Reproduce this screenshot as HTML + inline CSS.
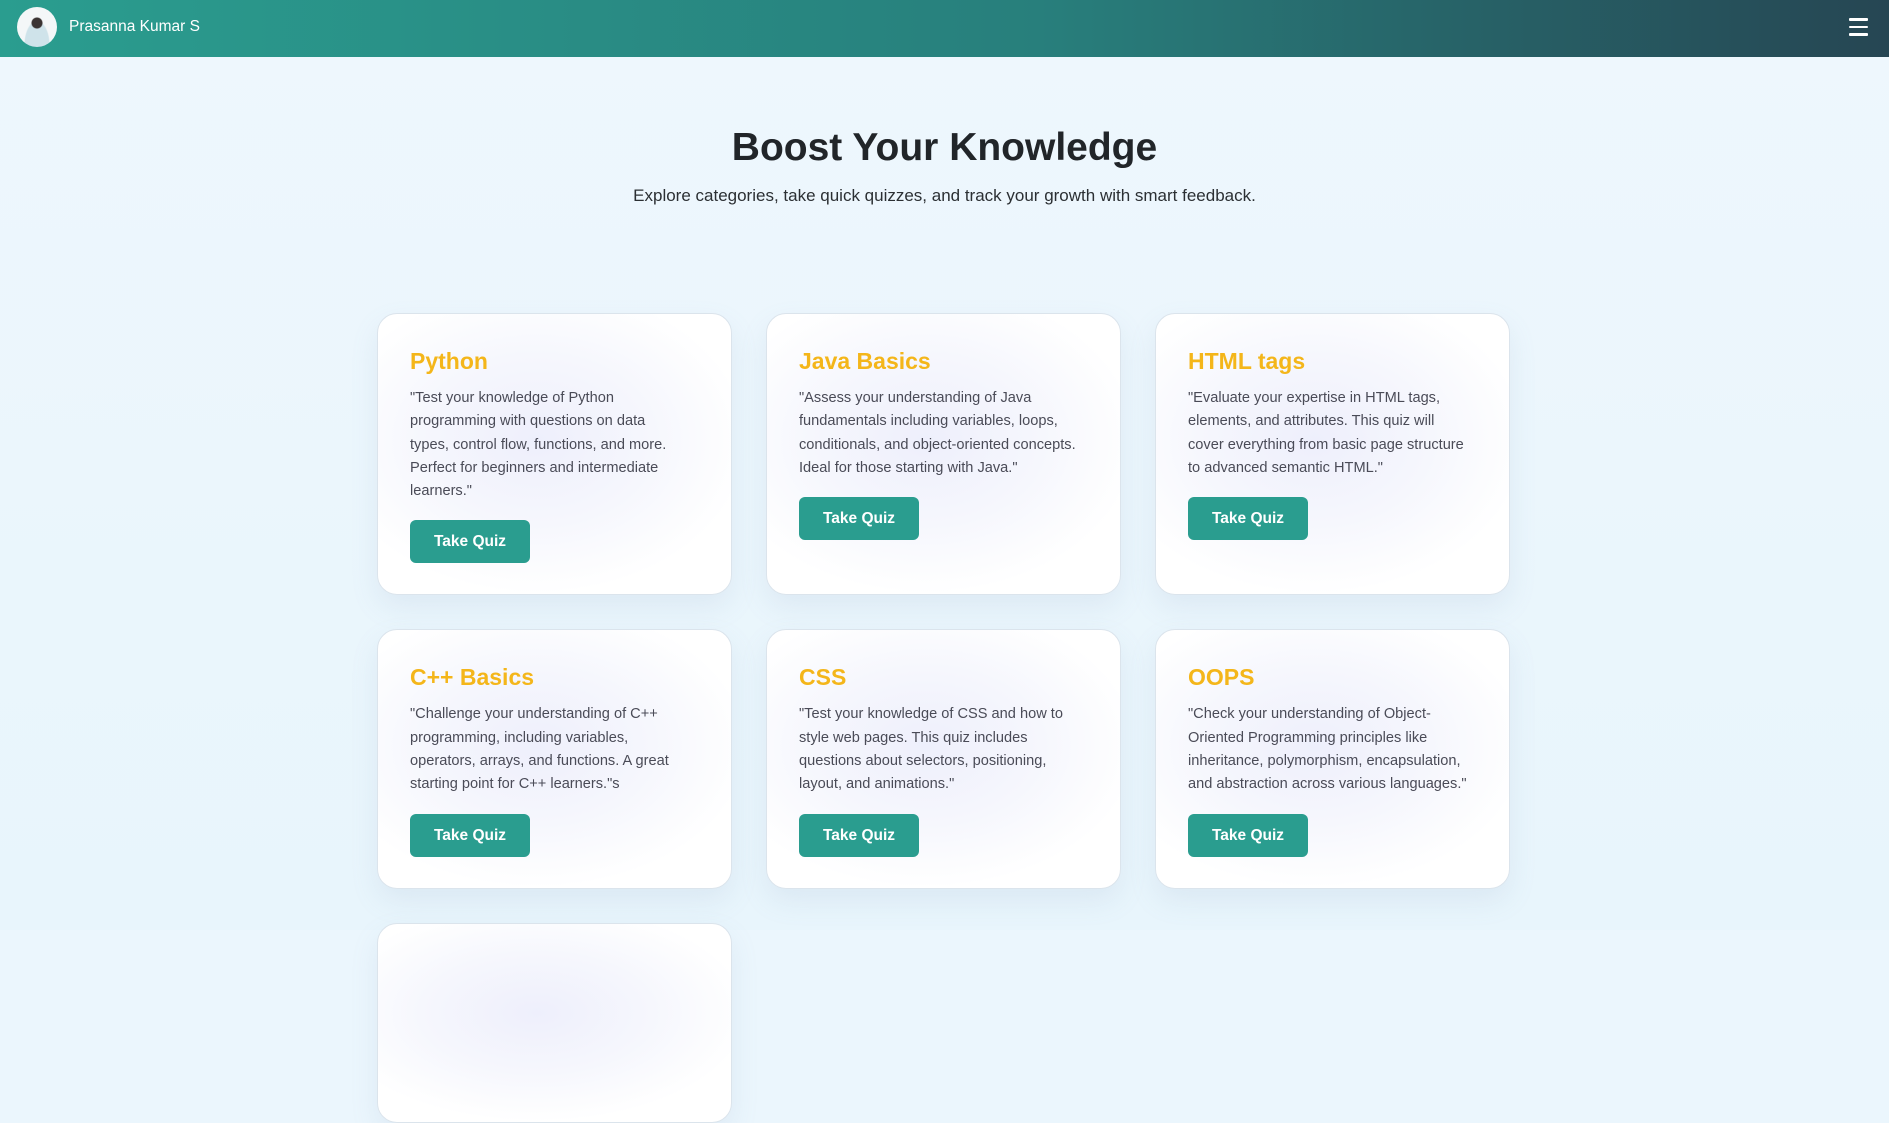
<!DOCTYPE html>
<html><head><meta charset="utf-8"><style>
*{box-sizing:border-box;margin:0;padding:0}
html{background:#ebf6fd}
body{width:1889px;height:930px;overflow:hidden;font-family:"Liberation Sans",sans-serif;background:linear-gradient(180deg,#eef7fd 0%,#e8f5fc 100%) no-repeat;background-size:1889px 930px}
.nav{height:57px;background:linear-gradient(90deg,#2a9d8f 0%,#287f7c 55%,#264653 100%);position:relative}
.av{position:absolute;left:17px;top:7px;width:40px;height:40px;border-radius:50%;background:radial-gradient(circle at 50% 40%,#3b3433 0 5px,transparent 6px),radial-gradient(ellipse at 50% 95%,#cfe3ea 0 12px,transparent 13px),#f4f7f8}
.nm{position:absolute;left:69px;top:18px;color:#fff;font-size:15.5px}
.hb{position:absolute;left:1849px;top:18px;width:19px}
.hb i{display:block;height:2.5px;background:#fff;margin-bottom:5px;border-radius:1px}
h1{position:absolute;top:126px;width:100%;text-align:center;font-size:39px;color:#212529;font-weight:bold}
.sub{position:absolute;top:186px;width:100%;text-align:center;font-size:17px;color:#2b2f33}
.grid{position:absolute;left:377px;top:313px;display:grid;grid-template-columns:355px 355px 355px;column-gap:34px;row-gap:34px}
.card{border-radius:20px;border:1px solid #dbe4ec;padding:32px 32px 31px 32px;background:radial-gradient(ellipse 60% 55% at 45% 45%,#eeeffc 0%,#f6f7fd 55%,#ffffff 100%);box-shadow:0 12px 28px rgba(120,150,180,.12)}
.card h3{font-size:23px;line-height:30px;color:#f4b61a;font-weight:600;margin:0 0 11px}
.card p{font-size:14.6px;line-height:23.3px;color:#4a4b57;margin-bottom:17px}
.btn{display:inline-block;width:120px;height:43px;line-height:43px;text-align:center;background:#2a9d8f;color:#fff;font-weight:bold;font-size:15.5px;border-radius:6px}
</style></head><body>
<div class="nav"><div class="av"></div><div class="nm">Prasanna Kumar S</div><div class="hb"><i></i><i></i><i></i></div></div>
<h1>Boost Your Knowledge</h1>
<div class="sub">Explore categories, take quick quizzes, and track your growth with smart feedback.</div>
<div class="grid">
<div class="card"><h3>Python</h3><p>"Test your knowledge of Python<br>programming with questions on data<br>types, control flow, functions, and more.<br>Perfect for beginners and intermediate<br>learners."</p><span class="btn">Take Quiz</span></div>
<div class="card"><h3>Java Basics</h3><p>"Assess your understanding of Java<br>fundamentals including variables, loops,<br>conditionals, and object-oriented concepts.<br>Ideal for those starting with Java."</p><span class="btn">Take Quiz</span></div>
<div class="card"><h3>HTML tags</h3><p>"Evaluate your expertise in HTML tags,<br>elements, and attributes. This quiz will<br>cover everything from basic page structure<br>to advanced semantic HTML."</p><span class="btn">Take Quiz</span></div>
<div class="card"><h3>C++ Basics</h3><p>"Challenge your understanding of C++<br>programming, including variables,<br>operators, arrays, and functions. A great<br>starting point for C++ learners."s</p><span class="btn">Take Quiz</span></div>
<div class="card"><h3>CSS</h3><p>"Test your knowledge of CSS and how to<br>style web pages. This quiz includes<br>questions about selectors, positioning,<br>layout, and animations."</p><span class="btn">Take Quiz</span></div>
<div class="card"><h3>OOPS</h3><p>"Check your understanding of Object-<br>Oriented Programming principles like<br>inheritance, polymorphism, encapsulation,<br>and abstraction across various languages."</p><span class="btn">Take Quiz</span></div>
<div class="card" style="height:200px"></div>
</div>
</body></html>
